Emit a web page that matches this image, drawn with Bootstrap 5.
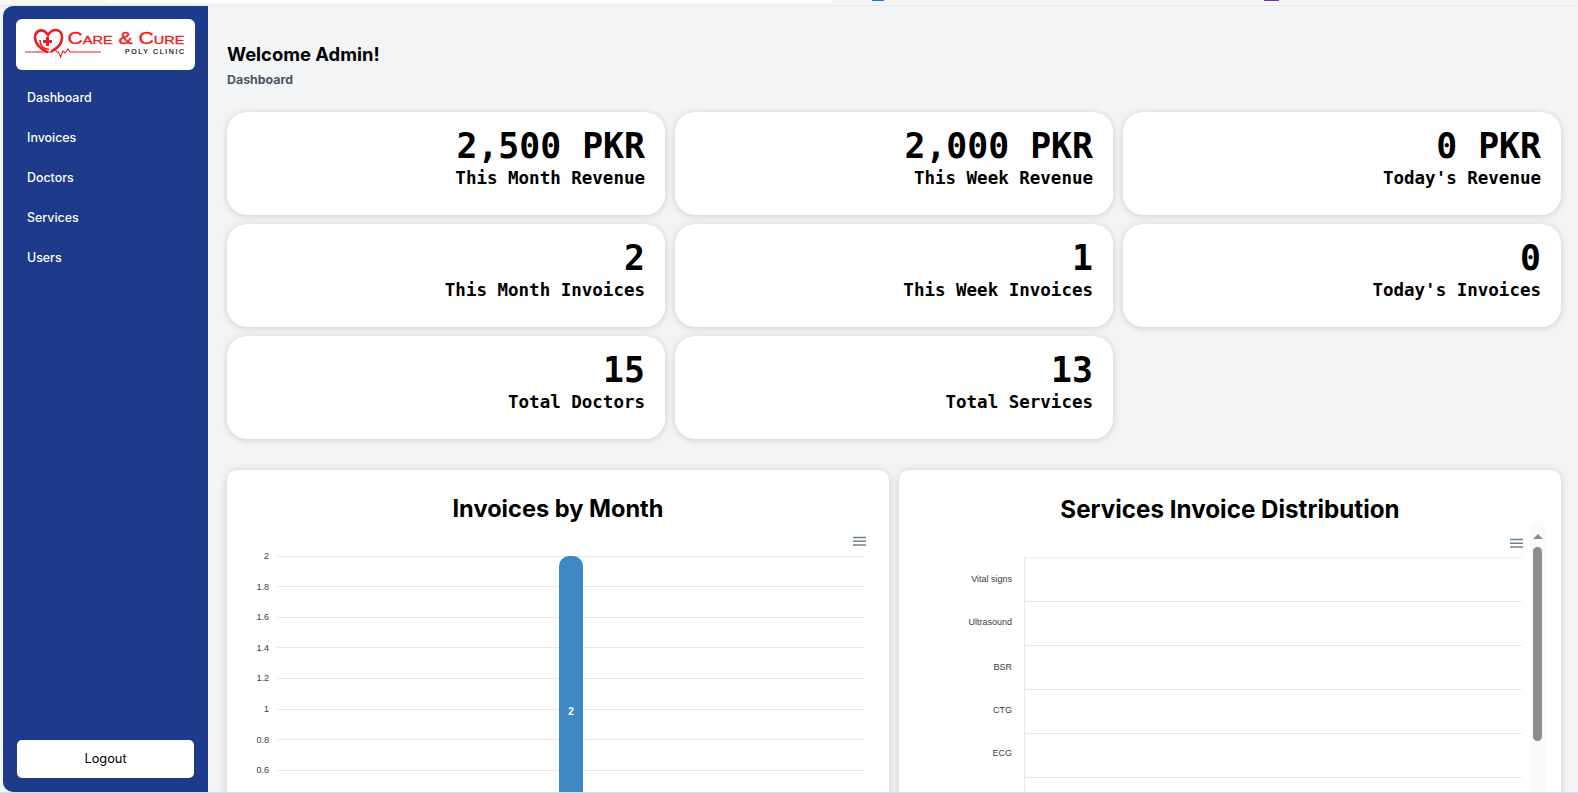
<!DOCTYPE html>
<html lang="en">
<head>
<meta charset="utf-8">
<title>Dashboard</title>
<link href="https://cdn.jsdelivr.net/npm/bootstrap@5.3.0/dist/css/bootstrap.min.css" rel="stylesheet">
<style>
html,body{height:100%;overflow:hidden}
body{background:#f3f4f6;font-family:Inter,"Liberation Sans",sans-serif;color:#000}
.topstrip{height:6px;background:#f6f6f6;border-bottom:1px solid #e6e7e9;position:relative;flex:none}
.tabwhite{position:absolute;left:105px;width:727px;top:0;height:3px;background:#fff;border-radius:0 0 6px 6px}
.tabblue{position:absolute;left:872px;width:12px;top:0;height:1px;background:#1a73e8}
.tabpurple{position:absolute;left:1264px;width:15px;top:0;height:1px;background:#6d35c9}
.shell{height:787px;padding-left:3px;border-bottom:1px solid #dcdde0}
.sidebar{width:205px;flex:none;background:#1e3a8a;border-radius:10px 0 0 10px;padding:13px 13px 14px 13px}
.logobox{height:51px;background:#fff;border-radius:6px;width:179px}
.menulink{color:#fff;font-size:12.4px;font-weight:500;height:40px;line-height:40px;padding-left:11px;text-decoration:none;display:block}
.menulist{margin-top:8px}
.logoutbtn{width:177px;height:38px;margin-left:1px;background:#fff;border:0;border-radius:5px;color:#000;font-size:12.8px;font-weight:400;padding:0}
.logoutbtn:hover{background:#fff;color:#000}
.mainpane{padding:34px 17px 0 19px;overflow:hidden}
.pagetitle{font-size:18.4px;font-weight:700;line-height:28px;margin:0}
.crumb{font-size:12.4px;font-weight:700;color:#4b5563;line-height:18px;margin-top:3px}
.statgrid{display:grid;grid-template-columns:repeat(3,1fr);column-gap:10px;row-gap:9.5px;margin-top:23px}
.statbox{height:102.5px;background:#fff;border:0;border-radius:20px;box-shadow:0 1px 7px rgba(0,0,0,.16);padding:14px 20px 0;text-align:right;font-family:"DejaVu Sans Mono",monospace;font-weight:700}
.statnum{font-size:34.8px;line-height:40px}
.statlabel{font-size:17.5px;line-height:24px}
.chartgrid{display:grid;grid-template-columns:repeat(2,1fr);gap:10px;margin-top:31.5px}
.chartbox{height:400px;background:#fff;border:0;border-radius:10px;box-shadow:0 1px 8px rgba(0,0,0,.16);overflow:hidden}
.charthead{font-size:24px;font-weight:700;text-align:center;line-height:30px;margin:0}
.head1{padding-top:23px;line-height:31px;font-size:23.6px}
.head2{padding-top:25px;font-size:24.2px}
.chartsvg{display:block;flex:none}
.barlabels{font-family:"Liberation Sans",sans-serif;font-size:9px;fill:#373d3f}
.chartwrap2{margin-top:-1px}
.fakescroll{width:15px;flex:none;background:#fafafa;padding-top:10px;display:flex;flex-direction:column;align-items:center;height:300px}
.fakeup{width:0;height:0;border-left:5px solid transparent;border-right:5px solid transparent;border-bottom:5px solid #8c8c8c}
.fakethumb{width:9px;height:194px;background:#8c8c8c;border-radius:5px;margin-top:8px}
</style>
</head>
<body>
<div class="topstrip"><span class="tabwhite"></span><span class="tabblue"></span><span class="tabpurple"></span></div>
<div class="shell d-flex">
  <aside class="sidebar d-flex flex-column">
    <div class="logobox d-flex align-items-center">
      <svg width="179" height="51" viewBox="0 0 179 51" xmlns="http://www.w3.org/2000/svg">
        <path d="M31 33 C23 29 19 24 19 18.5 C19 13 24 10 28 12 C30 13 31 14.5 32 16 C33.5 13.5 36 11 40 11 C44 11 46 14.5 46 18.5 C46 24 42 29 36 32" fill="none" stroke="#ed1c24" stroke-width="2.6" stroke-linecap="round"/>
        <path d="M24 21 C24 27 28 30 33 30.5" fill="none" stroke="#ed1c24" stroke-width="1.6"/>
        <rect x="30" y="18" width="3" height="9" fill="#ed1c24"/>
        <rect x="27" y="21" width="9" height="3" fill="#ed1c24"/>
        <path d="M9 33 H36 L38.5 30 L41 33 H42.5 L44.5 38 L47 32 L49 34 L52 30 L54 33 H85" fill="none" stroke="#ed1c24" stroke-width="1.1"/>
        <text x="51.5" y="25" font-family="'Liberation Sans',sans-serif" font-size="16" font-weight="400" stroke="#ed1c24" stroke-width=".35" fill="#ed1c24" style="font-variant:small-caps" textLength="117" lengthAdjust="spacingAndGlyphs">Care &amp; Cure</text>
        <text x="109" y="35" font-family="'Liberation Sans',sans-serif" font-size="7" font-weight="400" fill="#111" stroke="#111" stroke-width=".2" textLength="59">POLY CLINIC</text>
      </svg>
    </div>
    <nav class="menulist">
      <a class="menulink" href="#">Dashboard</a>
      <a class="menulink" href="#">Invoices</a>
      <a class="menulink" href="#">Doctors</a>
      <a class="menulink" href="#">Services</a>
      <a class="menulink" href="#">Users</a>
    </nav>
    <button class="btn logoutbtn mt-auto" type="button">Logout</button>
  </aside>
  <main class="mainpane flex-grow-1">
    <h1 class="pagetitle">Welcome Admin!</h1>
    <div class="crumb">Dashboard</div>
    <div class="statgrid">
      <div class="statbox"><div class="statnum">2,500 PKR</div><div class="statlabel">This Month Revenue</div></div>
      <div class="statbox"><div class="statnum">2,000 PKR</div><div class="statlabel">This Week Revenue</div></div>
      <div class="statbox"><div class="statnum">0 PKR</div><div class="statlabel">Today's Revenue</div></div>
      <div class="statbox"><div class="statnum">2</div><div class="statlabel">This Month Invoices</div></div>
      <div class="statbox"><div class="statnum">1</div><div class="statlabel">This Week Invoices</div></div>
      <div class="statbox"><div class="statnum">0</div><div class="statlabel">Today's Invoices</div></div>
      <div class="statbox"><div class="statnum">15</div><div class="statlabel">Total Doctors</div></div>
      <div class="statbox"><div class="statnum">13</div><div class="statlabel">Total Services</div></div>
    </div>
    <div class="chartgrid">
      <section class="chartbox">
        <h2 class="charthead head1">Invoices by Month</h2>
        <svg class="chartsvg" width="662" height="320" viewBox="0 0 662 320" xmlns="http://www.w3.org/2000/svg">
          <g stroke="#6e8192" stroke-width="1.5"><path d="M626 13.5H639M626 17.2H639M626 21H639"/></g>
          <g stroke="#e8e9eb" stroke-width="1">
            <path d="M50 32.5H638M50 62.5H638M50 93.5H638M50 123.5H638M50 154.5H638M50 185.5H638M50 215.5H638M50 246.5H638"/>
          </g>
          <path d="M332 320V42A10 10 0 0 1 342 32H346A10 10 0 0 1 356 42V320Z" fill="#3d88c5"/>
          <text x="344" y="190.5" text-anchor="middle" font-family="'Liberation Sans',sans-serif" font-size="10" font-weight="700" fill="#fff">2</text>
          <g class="barlabels" text-anchor="end">
            <text x="42" y="35">2</text><text x="42" y="66">1.8</text><text x="42" y="96">1.6</text><text x="42" y="127">1.4</text><text x="42" y="157">1.2</text><text x="42" y="188">1</text><text x="42" y="219">0.8</text><text x="42" y="249">0.6</text>
          </g>
        </svg>
      </section>
      <section class="chartbox">
        <h2 class="charthead head2">Services Invoice Distribution</h2>
        <div class="d-flex chartwrap2">
          <svg class="chartsvg" width="631" height="300" viewBox="0 0 631 300" xmlns="http://www.w3.org/2000/svg">
            <g stroke="#6e8192" stroke-width="1.5"><path d="M611 15.5H624M611 19.2H624M611 23H624"/></g>
            <g stroke="#e8e9eb" stroke-width="1">
              <path d="M125 34H623M125 77.5H623M125 121.5H623M125 165.5H623M125 209.5H623M125 253.5H623M125.5 33V300"/>
            </g>
            <g class="barlabels" text-anchor="end">
              <text x="113" y="58">Vital signs</text><text x="113" y="101">Ultrasound</text><text x="113" y="146">BSR</text><text x="113" y="189">CTG</text><text x="113" y="232">ECG</text>
            </g>
          </svg>
          <div class="fakescroll"><span class="fakeup"></span><span class="fakethumb"></span></div>
        </div>
      </section>
    </div>
  </main>
</div>
</body>
</html>
